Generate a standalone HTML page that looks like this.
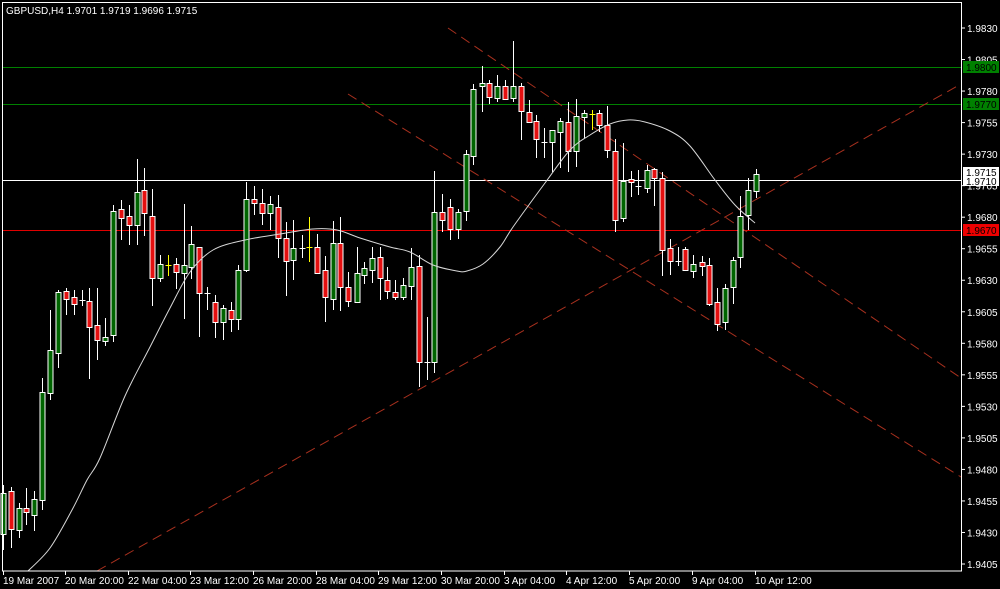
<!DOCTYPE html>
<html><head><meta charset="utf-8"><style>
html,body{margin:0;padding:0;background:#000;width:1000px;height:589px;overflow:hidden}
svg{display:block}
text{font-family:"Liberation Sans",sans-serif;font-size:10px;fill:#fff}
</style></head><body>
<svg id="s" width="1000" height="589" xmlns="http://www.w3.org/2000/svg">
<rect width="1000" height="589" fill="#000"/>
<g id="lines"></g>
<g id="candles"></g>
<path id="ma" fill="none" stroke="#d8d8d8" stroke-width="1" d=""/>
<g id="frame"></g>
<text x="6" y="14">GBPUSD,H4  1.9701 1.9719 1.9696 1.9715</text>
</svg>
<script>
var NS="http://www.w3.org/2000/svg";
function el(p,t,a,txt){var e=document.createElementNS(NS,t);for(var k in a)e.setAttribute(k,a[k]);if(txt)e.textContent=txt;document.getElementById(p).appendChild(e);return e;}
el("lines","line",{x1:2,y1:67.5,x2:961,y2:67.5,stroke:"#008000"});
el("lines","line",{x1:2,y1:104.5,x2:961,y2:104.5,stroke:"#008000"});
el("lines","line",{x1:2,y1:180.5,x2:961,y2:180.5,stroke:"#ffffff"});
el("lines","line",{x1:2,y1:230.5,x2:961,y2:230.5,stroke:"#e00000"});
var dc="#a8301e";
el("lines","line",{x1:97,y1:571,x2:961,y2:84,stroke:dc,"stroke-dasharray":"10,6"});
el("lines","line",{x1:448,y1:28,x2:961,y2:378,stroke:dc,"stroke-dasharray":"10,6"});
el("lines","line",{x1:348,y1:94,x2:961,y2:477,stroke:dc,"stroke-dasharray":"10,6"});
// smooth MA
var P=[[28,571],[50,548],[72,510],[87,480],[100,458],[125,396],[150,347],[170,308],[190,272],[213,250],[245,240],[280,234],[313,229],[337,230],[360,238],[390,247],[410,252],[433,265],[457,271],[467,271],[483,264],[500,247],[513,227],[545,183],[570,150],[590,135],[610,124],[628,120],[645,122],[670,131],[690,146],[715,180],[735,205],[755,223]];
var d="M"+P[0][0]+","+P[0][1];
for(var i=0;i<P.length-1;i++){var p0=P[Math.max(0,i-1)],p1=P[i],p2=P[i+1],p3=P[Math.min(P.length-1,i+2)];
d+=" C"+(p1[0]+(p2[0]-p0[0])/6)+","+(p1[1]+(p2[1]-p0[1])/6)+" "+(p2[0]-(p3[0]-p1[0])/6)+","+(p2[1]-(p3[1]-p1[1])/6)+" "+p2[0]+","+p2[1];}
document.getElementById("ma").setAttribute("d",d);
var C=[
[3,485,550,493,534,'g'],[11,487,548,491,529,'r'],[19,503,538,508,530,'g'],[26,488,525,508,512,'r'],[34,491,531,499,515,'g'],
[42,378,510,392,500,'g'],[50,310,400,350,393,'g'],[58,290,368,292,353,'g'],[66,288,315,291,299,'r'],[74,290,315,297,304,'r'],
[82,290,306,300,302,'d'],[89,288,379,301,327,'r'],[97,288,360,325,340,'r'],[105,318,346,337,341,'g'],[113,205,342,211,335,'g'],
[121,200,240,209,218,'r'],[129,205,245,216,225,'r'],[137,159,245,192,225,'g'],[144,168,236,190,213,'r'],[152,189,306,216,278,'r'],
[160,255,282,264,278,'g'],[168,255,276,265,266,'y'],[176,258,289,264,272,'r'],[184,204,319,265,273,'g'],[191,226,279,244,267,'g'],
[199,247,337,247,293,'r'],[207,287,310,293,294,'d'],[215,295,338,302,322,'r'],[223,305,340,308,322,'g'],[231,302,332,310,319,'r'],
[238,265,330,270,319,'g'],[246,182,272,199,270,'g'],[254,186,215,199,203,'r'],[262,189,225,203,213,'r'],[270,196,230,204,213,'g'],
[278,195,258,207,238,'r'],[286,222,296,238,261,'r'],[293,220,280,248,260,'g'],[302,235,258,248,249,'d'],[309,217,262,247,248,'y'],
[317,234,272,247,273,'r'],[325,256,322,270,297,'r'],[333,221,310,243,299,'g'],[340,217,311,243,287,'r'],[348,272,307,287,301,'r'],
[357,247,303,273,302,'g'],[364,262,284,268,275,'g'],[372,247,283,258,270,'g'],[380,247,300,257,278,'r'],[387,267,299,280,291,'r'],
[395,280,300,292,297,'r'],[403,278,300,285,297,'g'],[411,248,300,267,286,'g'],[419,255,387,266,362,'r'],[427,317,380,362,363,'d'],
[434,171,373,212,362,'g'],[442,194,232,212,220,'r'],[450,199,240,207,229,'r'],[458,209,239,212,229,'g'],[466,150,221,154,211,'g'],
[473,84,165,89,156,'g'],[482,66,112,83,86,'g'],[489,80,104,83,97,'r'],[497,75,102,86,98,'g'],[505,80,100,86,99,'r'],
[513,41,102,86,98,'g'],[521,83,140,86,111,'r'],[529,100,123,112,122,'r'],[536,115,158,121,139,'r'],[544,128,158,142,143,'d'],
[552,130,172,130,142,'g'],[560,118,168,121,132,'g'],[568,102,172,122,151,'r'],[576,99,167,116,151,'g'],[584,110,138,113,117,'g'],
[592,110,130,114,115,'y'],[599,110,132,113,125,'r'],[607,106,158,125,150,'r'],[615,139,232,151,220,'r'],[623,143,222,181,218,'g'],
[631,171,197,179,182,'r'],[638,170,195,186,187,'d'],[647,165,193,170,188,'g'],[654,168,206,169,178,'r'],[662,172,276,178,250,'r'],
[670,239,275,248,261,'r'],[678,247,266,261,262,'d'],[685,247,271,249,270,'r'],[693,255,278,264,271,'g'],[702,256,276,262,266,'r'],
[709,258,306,265,304,'r'],[717,288,331,302,324,'r'],[725,284,330,288,322,'g'],[733,257,304,260,287,'g'],[740,196,268,216,257,'g'],
[748,178,230,190,215,'g'],[756,169,198,174,191,'g']
];
C.forEach(function(c){
 var x=c[0]+0.5,t=c[5];
 var wc=(t=='y')?"#ffff00":"#ffffff";
 el("candles","line",{x1:x,y1:c[1],x2:x,y2:c[2],stroke:wc});
 if(t=='d'||t=='y'){el("candles","line",{x1:x-3,y1:c[3]+0.5,x2:x+3,y2:c[3]+0.5,stroke:wc});}
 else el("candles","rect",{x:x-2.5,y:c[3]+0.5,width:5,height:Math.max(1,c[4]-c[3]),fill:t=='g'?"#006400":"#e41010",stroke:"#fff","stroke-width":1});
});
el("frame","rect",{x:2.5,y:2.5,width:959,height:568.5,fill:"none",stroke:"#fff"});
for(var i=0;i<=17;i++){
 var p=(1.9830-i*0.0025).toFixed(4),y=28+i*31.53;
 el("frame","line",{x1:962,y1:y,x2:965,y2:y,stroke:"#fff"});
 el("frame","text",{x:967,y:y+4},p);
}
function box(y,fill,tc,txt,h){el("frame","rect",{x:963,y:y,width:36,height:h||12,fill:fill});el("frame","text",{x:966,y:y+10,style:"fill:"+tc},txt);}
box(61,"#008000","#000","1.9800");
box(98,"#008000","#000","1.9770");
el("frame","rect",{x:963,y:167,width:36,height:19,fill:"#fff"});
el("frame","text",{x:966,y:176,style:"fill:#000"},"1.9715");
el("frame","text",{x:966,y:185,style:"fill:#000"},"1.9710");
box(224,"#ee0000","#000","1.9670");
var T=[[3,"19 Mar 2007"],[65,"20 Mar 20:00"],[128,"22 Mar 04:00"],[190,"23 Mar 12:00"],[253,"26 Mar 20:00"],[316,"28 Mar 04:00"],[378,"29 Mar 12:00"],[441,"30 Mar 20:00"],[504,"3 Apr 04:00"],[566,"4 Apr 12:00"],[629,"5 Apr 20:00"],[692,"9 Apr 04:00"],[755,"10 Apr 12:00"]];
T.forEach(function(t){el("frame","line",{x1:t[0]+0.5,y1:571,x2:t[0]+0.5,y2:575,stroke:"#fff"});el("frame","text",{x:t[0],y:584},t[1]);});
</script>
</body></html>
